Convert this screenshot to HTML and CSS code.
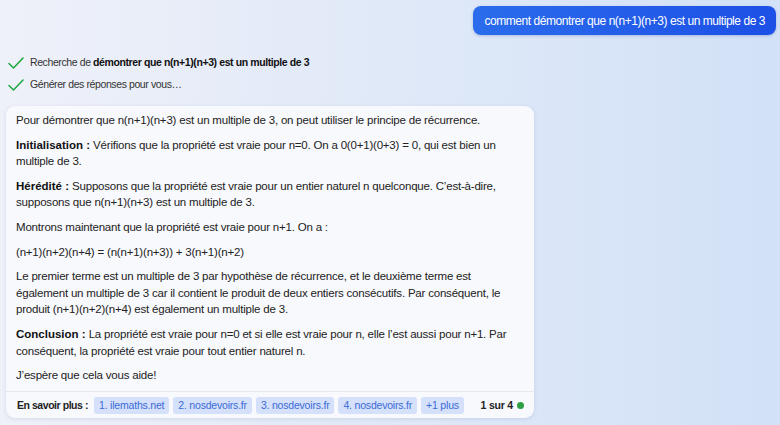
FILE: index.html
```html
<!DOCTYPE html>
<html lang="fr">
<head>
    <meta charset="UTF-8">
    <meta name="viewport" content="width=device-width, initial-scale=1.0">
    <title>Chat</title>
    <link rel="stylesheet" href="styles.css">
</head>
<body>
    <div class="user-row">
        <div class="user-bubble">comment démontrer que n(n+1)(n+3) est un multiple de 3</div>
    </div>

    <!-- Etapes de recherche -->
    <div class="steps">
        <div class="step">
            <svg class="check" viewBox="0 0 16 12" width="16" height="12"><path d="M1 6.5 L5.5 11 L15 1" fill="none" stroke="#22a845" stroke-width="1.6" stroke-linecap="round" stroke-linejoin="round"/></svg>
            <span>Recherche de <b>démontrer que n(n+1)(n+3) est un multiple de 3</b></span>
        </div>
        <div class="step">
            <svg class="check" viewBox="0 0 16 12" width="16" height="12"><path d="M1 6.5 L5.5 11 L15 1" fill="none" stroke="#22a845" stroke-width="1.6" stroke-linecap="round" stroke-linejoin="round"/></svg>
            <span>Générer des réponses pour vous…</span>
        </div>
    </div>

    <div class="answer">
        <div class="answer-body">
            <p>Pour démontrer que n(n+1)(n+3) est un multiple de 3, on peut utiliser le principe de récurrence.</p>
            <p><b>Initialisation :</b> Vérifions que la propriété est vraie pour n=0. On a 0(0+1)(0+3) = 0, qui est bien un multiple de 3.</p>
            <p><b>Hérédité :</b> Supposons que la propriété est vraie pour un entier naturel n quelconque. C’est-à-dire, supposons que n(n+1)(n+3) est un multiple de 3.</p>
            <p>Montrons maintenant que la propriété est vraie pour n+1. On a :</p>
            <p>(n+1)(n+2)(n+4) = (n(n+1)(n+3)) + 3(n+1)(n+2)</p>
            <p>Le premier terme est un multiple de 3 par hypothèse de récurrence, et le deuxième terme est également un multiple de 3 car il contient le produit de deux entiers consécutifs. Par conséquent, le produit (n+1)(n+2)(n+4) est également un multiple de 3.</p>
            <p><b>Conclusion :</b> La propriété est vraie pour n=0 et si elle est vraie pour n, elle l’est aussi pour n+1. Par conséquent, la propriété est vraie pour tout entier naturel n.</p>
            <p>J’espère que cela vous aide!</p>
        </div>
        <div class="answer-footer">
            <span class="learn">En savoir plus :</span>
            <a class="chip">1. ilemaths.net</a>
            <a class="chip">2. nosdevoirs.fr</a>
            <a class="chip">3. nosdevoirs.fr</a>
            <a class="chip">4. nosdevoirs.fr</a>
            <a class="chip">+1 plus</a>
            <span class="pager">1 sur 4 <span class="dot"></span></span>
        </div>
    </div>
</body>
</html>
```

FILE: styles.css
```css
* {
    margin: 0;
    padding: 0;
    box-sizing: border-box;
}

body {
    font-family: 'Liberation Sans', Arial, sans-serif;
    background: linear-gradient(90deg, #eff1f9, #e0e9f8 50%, #d2e1f7);
    color: #222;
    width: 780px;
    height: 425px;
    overflow: hidden;
    padding: 6px 4px 0 6px;
}

/* Question de l'utilisateur */
.user-row {
    display: flex;
    justify-content: flex-end;
}

.user-bubble {
    background: linear-gradient(90deg, #2a6cec, #1d50e6);
    color: #fff;
    font-size: 12px;
    letter-spacing: -0.45px;
    padding: 7px 11px 6px 11px;
    border-radius: 8px;
    box-shadow: 0 1px 3px rgba(30, 60, 140, 0.25);
    line-height: 16px;
}

/* Etapes */
.steps {
    margin-top: 21px;
    display: flex;
    flex-direction: column;
    gap: 9px;
    padding-left: 2px;
}

.step {
    display: flex;
    align-items: center;
    gap: 6px;
    font-size: 10.5px;
    letter-spacing: -0.4px;
    color: #333;
    line-height: 13px;
}

.step b {
    color: #111;
}

.check {
    flex: none;
}

/* Carte de réponse */
.answer {
    margin-top: 15px;
    width: 528px;
    background: #f8f9fd;
    border-radius: 9px;
    box-shadow: 0 1px 4px rgba(40, 60, 110, 0.12);
}

.answer-body {
    padding: 6px 10px 7px 10px;
    font-size: 11.5px;
    letter-spacing: -0.2px;
    line-height: 16.6px;
    color: #222;
}

.answer-body p {
    margin-bottom: 8px;
}

.answer-body p:last-child {
    margin-bottom: 0;
}

.answer-body b {
    color: #111;
    letter-spacing: 0;
}

.answer-footer {
    border-top: 1px solid #e6e8ee;
    display: flex;
    align-items: center;
    gap: 4px;
    padding: 5px 10px 4px 11px;
    font-size: 10.5px;
    letter-spacing: -0.2px;
    white-space: nowrap;
}

.learn {
    font-weight: bold;
    color: #222;
    letter-spacing: -0.45px;
    margin-right: 2px;
}

.chip {
    background: #d5e1fb;
    color: #3b6ad6;
    padding: 2px 5px;
    border-radius: 3px;
    line-height: 13px;
}

.pager {
    margin-left: auto;
    font-weight: bold;
    color: #222;
    display: flex;
    align-items: center;
    gap: 4px;
}

.dot {
    width: 7px;
    height: 7px;
    border-radius: 50%;
    background: #2ea043;
}
```
